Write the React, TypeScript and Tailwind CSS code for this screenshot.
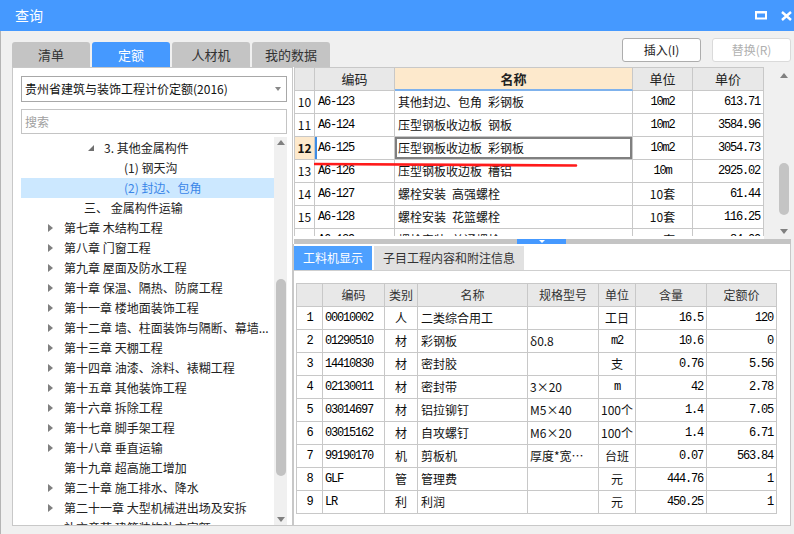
import React from "react";

const mono = "font-['Liberation_Mono',monospace] text-[12px] tracking-[-1.2px] text-black";
const cjk = "text-[12px]";

function T({ v }: { v: string }) {
  const ascii = /^[\x20-\x7e]*$/.test(v);
  return <span className={ascii ? mono : cjk}>{v}</span>;
}

const topRows = [
  ["10", "A6-123", "其他封边、包角\u2002彩钢板", "10m2", "613.71"],
  ["11", "A6-124", "压型钢板收边板\u2002钢板", "10m2", "3584.96"],
  ["12", "A6-125", "压型钢板收边板\u2002彩钢板", "10m2", "3054.73"],
  ["13", "A6-126", "压型钢板收边板\u2002槽铝", "10m", "2925.02"],
  ["14", "A6-127", "螺栓安装\u2002高强螺栓", "10套", "61.44"],
  ["15", "A6-128", "螺栓安装\u2002花篮螺栓", "10套", "116.25"],
  ["16", "A6-129", "螺栓安装\u2002普通螺栓", "10套", "84.00"],
];

const botRows = [
  ["1", "00010002", "人", "二类综合用工", "", "工日", "16.5", "120"],
  ["2", "01290510", "材", "彩钢板", "δ0.8", "m2", "10.6", "0"],
  ["3", "14410830", "材", "密封胶", "", "支", "0.76", "5.56"],
  ["4", "02130011", "材", "密封带", "3×20", "m", "42", "2.78"],
  ["5", "03014697", "材", "铝拉铆钉", "M5×40", "100个", "1.4", "7.05"],
  ["6", "03015162", "材", "自攻螺钉", "M6×20", "100个", "1.4", "6.71"],
  ["7", "99190170", "机", "剪板机", "厚度*宽…", "台班", "0.07", "563.84"],
  ["8", "GLF", "管", "管理费", "", "元", "444.76", "1"],
  ["9", "LR", "利", "利润", "", "元", "450.25", "1"],
];

const chapters = [
  "第七章 木结构工程",
  "第八章 门窗工程",
  "第九章 屋面及防水工程",
  "第十章 保温、隔热、防腐工程",
  "第十一章 楼地面装饰工程",
  "第十二章 墙、柱面装饰与隔断、幕墙...",
  "第十三章 天棚工程",
  "第十四章 油漆、涂料、裱糊工程",
  "第十五章 其他装饰工程",
  "第十六章 拆除工程",
  "第十七章 脚手架工程",
  "第十八章 垂直运输",
  "第十九章 超高施工增加",
  "第二十章 施工排水、降水",
  "第二十一章 大型机械进出场及安拆",
  "补充章节 建筑装饰补充定额",
];

const topCols = "grid grid-cols-[20px_80px_238px_60px_71px]";
const botCols = "grid grid-cols-[26px_62px_33px_110px_71px_37px_71px_70px]";
const cell = "flex items-center border-r border-b border-[#c8c8c8] overflow-hidden whitespace-nowrap";

function UpArrow() {
  return <div className="h-0 w-0 border-x-[4px] border-x-transparent border-b-[5px] border-b-[#808080]" />;
}
function DownArrow() {
  return <div className="h-0 w-0 border-x-[4px] border-x-transparent border-t-[5px] border-t-[#808080]" />;
}

function TreeRow({ text, indent, kind, active }: { text: string; indent: string; kind: "closed" | "open" | "none"; active?: boolean }) {
  return (
    <div className={`flex h-[20px] shrink-0 items-center whitespace-nowrap ${indent} ${active ? "bg-[#cce8ff] text-[#3a86e8]" : "text-[#222]"}`}>
      {kind === "closed" && (
        <div className="flex w-[18px] shrink-0 pl-[2px]">
          <div className="h-0 w-0 border-y-[4px] border-y-transparent border-l-[5px] border-l-[#808080]" />
        </div>
      )}
      {kind === "open" && (
        <div className="flex w-[18px] shrink-0 pl-[2px]">
          <svg width="7" height="7" viewBox="0 0 7 7">
            <polygon points="6,0 6,6 0,6" fill="#707070" />
          </svg>
        </div>
      )}
      <span className="text-[12px]">{text}</span>
    </div>
  );
}

export default function App() {
  return (
    <div className="flex h-[534px] w-[794px] flex-col overflow-hidden bg-[#f0f0f0] font-['Noto_Sans_CJK_SC',sans-serif]">
      {/* 标题栏 */}
      <div className="flex h-[31px] shrink-0 items-center bg-[#4599ff] pl-[15px] pr-[2px]">
        <span className="text-[14px] text-white">查询</span>
        <div className="ml-auto flex items-center gap-[14px]">
          <svg width="12" height="9" viewBox="0 0 12 9">
            <rect x="1" y="1.5" width="10" height="6" fill="none" stroke="white" strokeWidth="2" />
            <rect x="0" y="0" width="12" height="2" fill="white" />
          </svg>
          <svg width="11" height="10" viewBox="0 0 11 10">
            <path d="M1 1 L10 9 M10 1 L1 9" stroke="white" strokeWidth="2.4" />
          </svg>
        </div>
      </div>

      <div className="flex flex-1 flex-col border-l border-[#b4b4b4]">
        {/* 页签 + 按钮 */}
        <div className="flex h-[36px] shrink-0 pl-[11px] pr-[3px]">
          <div className="flex gap-[2px] self-end">
            {["清单", "定额", "人材机", "我的数据"].map((t) => (
              <div
                key={t}
                className={`flex h-[25px] w-[78px] items-center justify-center rounded-t-[3px] text-[13px] ${t === "定额" ? "bg-[#4599ff] text-white" : "bg-[#c4c4c4] text-[#333]"}`}
              >
                {t}
              </div>
            ))}
          </div>
          <div className="ml-auto mt-[7px] flex gap-[11px] self-start">
            <div className="flex h-[24px] w-[79px] items-center justify-center rounded-[3px] border border-[#adadad] bg-white text-[12px] text-[#222]">
              插入(I)
            </div>
            <div className="flex h-[24px] w-[79px] items-center justify-center rounded-[3px] border border-[#dadada] bg-white text-[12px] text-[#b0b0b0]">
              替换(R)
            </div>
          </div>
        </div>

        <div className="flex">
          {/* 左侧定额树 */}
          <div className="ml-[11px] flex h-[459px] w-[281px] shrink-0 flex-col border border-[#c8c8c8] bg-white pl-[8px] pr-[5px] pt-[8px]">
            <div className="flex h-[26px] shrink-0 items-center border border-[#a8a8a8] pl-[3px] pr-[5px] text-[12px] text-[#111]">
              <span>贵州省建筑与装饰工程计价定额(2016)</span>
              <div className="ml-auto h-0 w-0 border-x-[3px] border-x-transparent border-t-[4px] border-t-[#888]" />
            </div>
            <div className="mt-[7px] flex h-[25px] shrink-0 items-center border border-[#c4c4c4] pl-[3px] text-[12px] text-[#a0a0a0]">
              搜索
            </div>
            <div className="mt-[3px] flex min-h-0 flex-1">
              <div className="flex w-[253px] flex-col overflow-hidden pt-[1px]">
                <TreeRow text="3. 其他金属构件" indent="pl-[65px]" kind="open" />
                <TreeRow text="(1) 钢天沟" indent="pl-[103px]" kind="none" />
                <TreeRow text="(2) 封边、包角" indent="pl-[103px]" kind="none" active />
                <TreeRow text="三、 金属构件运输" indent="pl-[63px]" kind="none" />
                {chapters.map((c) => (
                  <TreeRow
                    key={c}
                    text={c}
                    indent={c.startsWith("第十九") || c.startsWith("补充") ? "pl-[43px]" : "pl-[25px]"}
                    kind={c.startsWith("第十九") || c.startsWith("补充") ? "none" : "closed"}
                  />
                ))}
              </div>
              <div className="flex w-[13px] flex-col items-center bg-[#f0f0f0] pt-[3px]">
                <UpArrow />
                <div className="mt-[134px] h-[197px] w-[10px] shrink-0 rounded-full bg-[#c2c2c2]" />
                <div className="mt-[41px]">
                  <DownArrow />
                </div>
              </div>
            </div>
          </div>

          {/* 右侧 */}
          <div className="relative flex w-[498px] flex-col bg-white">
            {/* 定额列表 */}
            <div className="ml-[1px] flex h-[172px] shrink-0">
              <div className="h-[169px] w-[470px] overflow-hidden border-l border-t border-[#c8c8c8]">
                <div className={`${topCols} h-[23px] text-[13px] text-[#222]`}>
                  <div className={`${cell} bg-[#e8e8e8]`} />
                  <div className={`${cell} justify-center bg-[#e8e8e8]`}>编码</div>
                  <div className="flex items-center justify-center border-b-2 border-r border-b-[#7fb2ec] border-r-[#c8c8c8] bg-[#fde9cc] font-bold">
                    名称
                  </div>
                  <div className={`${cell} justify-center bg-[#e8e8e8]`}>单位</div>
                  <div className={`${cell} justify-center bg-[#e8e8e8]`}>单价</div>
                </div>
                {topRows.map((r) => {
                  const sel = r[0] === "12";
                  return (
                    <div key={r[0]} className={`${topCols} h-[23px] shrink-0 text-[#111]`}>
                      <div className={`${cell} justify-center text-[12px] ${sel ? "bg-[#fde9cc] font-bold" : ""}`}>{r[0]}</div>
                      <div className={`${cell} pl-[3px] ${sel ? "shadow-[inset_2px_0_0_#3c8ce6]" : ""}`}>
                        <T v={r[1]} />
                      </div>
                      <div className={`${cell} pl-[3px] ${sel ? "shadow-[inset_0_0_0_2px_#808080]" : ""}`}>
                        <T v={r[2]} />
                      </div>
                      <div className={`${cell} justify-center`}>
                        <T v={r[3]} />
                      </div>
                      <div className={`${cell} justify-end pr-[3px]`}>
                        <T v={r[4]} />
                      </div>
                    </div>
                  );
                })}
              </div>
              <div className="flex h-[172px] flex-1 flex-col bg-[#f0f0f0] pl-[14px]">
                <div className="flex w-[11px] flex-col items-center pt-[6px]">
                  <UpArrow />
                  <div className="mt-[85px] h-[52px] w-[10px] rounded-full bg-[#c4c4c4]" />
                  <div className="mt-[14px]">
                    <DownArrow />
                  </div>
                </div>
              </div>
            </div>

            {/* 分隔条 */}
            <div className="ml-[1px] flex h-[5px] shrink-0 bg-[#c4c4c4]">
              <div className="ml-[223px] flex h-[5px] w-[49px] items-center justify-center bg-[#4599ff]">
                <div className="h-0 w-0 border-x-[3px] border-x-transparent border-t-[3px] border-t-white" />
              </div>
            </div>

            {/* 工料机 */}
            <div className="flex h-[282px] shrink-0 flex-col border-x border-b border-[#c8c8c8] bg-white">
              <div className="flex h-[27px] shrink-0 items-end gap-[2px] border-b border-[#cfcfcf]">
                <div className="flex h-[24px] w-[78px] items-center justify-center bg-[#4da0ff] text-[12px] text-white">工料机显示</div>
                <div className="flex h-[24px] w-[150px] items-center justify-center bg-[#e1e1e1] text-[12px] text-[#333]">
                  子目工程内容和附注信息
                </div>
              </div>
              <div className="ml-[2px] mt-[12px] w-[481px] border-l border-t border-[#c8c8c8]">
                <div className={`${botCols} h-[23px] bg-[#e8e8e8] text-[12px] text-[#333]`}>
                  {["", "编码", "类别", "名称", "规格型号", "单位", "含量", "定额价"].map((h, i) => (
                    <div key={i} className={`${cell} justify-center`}>
                      {h}
                    </div>
                  ))}
                </div>
                {botRows.map((r) => (
                  <div key={r[0]} className={`${botCols} h-[23px] text-[#111]`}>
                    <div className={`${cell} justify-center`}>
                      <T v={r[0]} />
                    </div>
                    <div className={`${cell} pl-[2px]`}>
                      <T v={r[1]} />
                    </div>
                    <div className={`${cell} justify-center`}>
                      <T v={r[2]} />
                    </div>
                    <div className={`${cell} pl-[3px]`}>
                      <T v={r[3]} />
                    </div>
                    <div className={`${cell} pl-[2px]`}>
                      <T v={r[4]} />
                    </div>
                    <div className={`${cell} justify-center`}>
                      <T v={r[5]} />
                    </div>
                    <div className={`${cell} justify-end pr-[3px]`}>
                      <T v={r[6]} />
                    </div>
                    <div className={`${cell} justify-end pr-[3px]`}>
                      <T v={r[7]} />
                    </div>
                  </div>
                ))}
              </div>
            </div>

            {/* 红色标注线 */}
            <svg className="pointer-events-none absolute left-[21px] top-[95px]" width="264" height="6" viewBox="0 0 264 6">
              <path d="M1 2 L262 3.5" stroke="#ff1a1a" strokeWidth="2.6" strokeLinecap="round" />
            </svg>
          </div>
        </div>
      </div>
    </div>
  );
}
